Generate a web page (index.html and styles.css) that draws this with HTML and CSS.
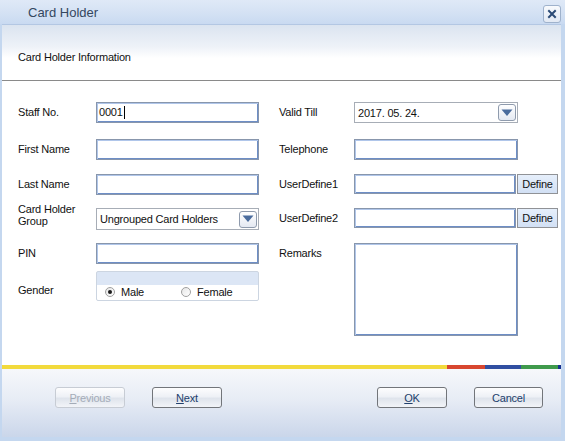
FILE: index.html
```html
<!DOCTYPE html>
<html>
<head>
<meta charset="utf-8">
<link rel="stylesheet" href="styles.css">
</head>
<body>
<div class="window">
  <div class="titlebar">
    <span class="title">Card Holder</span>
    <div class="close">
      <svg width="10" height="10" viewBox="0 0 10 10"><path d="M2 2 L8 8 M8 2 L2 8" stroke="#2c4b76" stroke-width="2" stroke-linecap="square"/></svg>
    </div>
  </div>
  <div class="body">
    <div class="header">Card Holder Information</div>
    <div class="form">
      <div class="lab c1">Staff No.</div>
      <div class="field c2">0001<span class="caret"></span></div>
      <div class="lab c4">Valid Till</div>
      <div class="combo c5">
        <span>2017. 05. 24.</span>
        <span class="arrow"><svg width="12" height="8" viewBox="0 0 12 8"><polygon points="0.5,0.5 11.5,0.5 6,7" fill="#4a6c9d"/></svg></span>
      </div>

      <div class="lab c1">First Name</div>
      <div class="field c2"></div>
      <div class="lab c4">Telephone</div>
      <div class="field c5"></div>

      <div class="lab c1">Last Name</div>
      <div class="field c2"></div>
      <div class="lab c4">UserDefine1</div>
      <div class="define-row c56">
        <div class="field narrow"></div>
        <div class="define">Define</div>
      </div>

      <div class="lab two c1">Card Holder<br>Group</div>
      <div class="combo tall c2">
        <span>Ungrouped Card Holders</span>
        <span class="arrow"><svg width="12" height="8" viewBox="0 0 12 8"><polygon points="0.5,0.5 11.5,0.5 6,7" fill="#4a6c9d"/></svg></span>
      </div>
      <div class="lab c4">UserDefine2</div>
      <div class="define-row c56">
        <div class="field narrow"></div>
        <div class="define">Define</div>
      </div>

      <div class="lab c1">PIN</div>
      <div class="field c2"></div>
      <div class="lab c4">Remarks</div>
      <div class="field remarks c5"></div>

      <div class="lab gender-lab c1">Gender</div>
      <div class="gender c2">
        <div class="radio-item male"><span class="radio checked"></span><span>Male</span></div>
        <div class="radio-item"><span class="radio"></span><span>Female</span></div>
      </div>
    </div>
    <div class="stripe"></div>
    <div class="footer">
      <div class="btn-group">
        <div class="btn disabled"><u>P</u>revious</div>
        <div class="btn"><u>N</u>ext</div>
      </div>
      <div class="btn-group">
        <div class="btn"><u>O</u>K</div>
        <div class="btn cancel">Cancel</div>
      </div>
    </div>
  </div>
</div>
</body>
</html>
```
FILE: styles.css
```css
* { box-sizing: border-box; }
body {
  margin: 0;
  font-family: "Liberation Sans", Arial, sans-serif;
  font-size: 11px;
  letter-spacing: -0.2px;
  color: #111;
}
.window {
  width: 565px;
  height: 441px;
  background: #c4d7ef;
  display: flex;
  flex-direction: column;
}
.titlebar {
  height: 24px;
  flex: none;
  display: flex;
  align-items: center;
  justify-content: space-between;
  padding: 0 4px 0 28px;
  background: linear-gradient(#dfe9f7, #d5e2f4 50%, #c9daf1);
}
.title {
  font-size: 13px;
  letter-spacing: 0;
  color: #34475f;
  margin-top: 1px;
}
.close {
  width: 18px;
  height: 18px;
  margin-top: 4px;
  border: 1px solid #9fb2cc;
  border-radius: 3px;
  background: linear-gradient(#f8fafd, #e2e9f4);
  display: flex;
  align-items: center;
  justify-content: center;
}
.body {
  flex: 1;
  margin: 0 4px 4px 2px;
  border-top: 1px solid #b3c7e3;
  display: flex;
  flex-direction: column;
  background: #fff;
}
.header {
  height: 56px;
  flex: none;
  border-bottom: 1px solid #8a8a8a;
  background: linear-gradient(#dbe4f0, #eef2f8 40%, #fff 60%);
  padding: 26px 0 0 16px;
  line-height: 12px;
}
.form {
  flex: 1;
  display: grid;
  grid-template-columns: 78px 163px 20px 75px 164px 41px;
  grid-template-rows: 37px 35px 34px 35px 28px 1fr;
  align-items: start;
  padding: 21px 0 0 16px;
}
.c1 { grid-column: 1; }
.c2 { grid-column: 2; }
.c4 { grid-column: 4; }
.c5 { grid-column: 5; }
.c56 { grid-column: 5 / span 2; }
.lab {
  height: 21px;
  line-height: 21px;
  white-space: nowrap;
}
.lab.two {
  height: auto;
  line-height: 12px;
  margin-top: -5px;
}
.lab.gender-lab {
  height: auto;
  line-height: 12px;
  margin-top: 13px;
}
.field {
  height: 21px;
  border: 1px solid #8896ac;
  box-shadow: inset 1px 1px 0 #b0c6ea, inset -1px -1px 0 #6d8ec6;
  background: #fff;
  padding: 0 2px;
  line-height: 19px;
  display: flex;
  align-items: center;
}
.caret {
  display: inline-block;
  width: 1px;
  height: 13px;
  background: #000;
  margin-left: 1px;
}
.field.remarks {
  grid-row: span 2;
  height: 93px;
}
.combo {
  height: 21px;
  border: 1px solid #a7adb6;
  background: #fff;
  display: flex;
  align-items: center;
  justify-content: space-between;
  padding: 0 1px 0 3px;
}
.combo.tall { height: 22px; }
.arrow {
  width: 18px;
  height: 17px;
  border: 1px solid #8f9bad;
  border-radius: 3px;
  background: linear-gradient(#ffffff, #e4e9f2);
  display: flex;
  align-items: center;
  justify-content: center;
}
.define-row {
  display: flex;
  gap: 1px;
}
.field.narrow { width: 162px; height: 20px; }
.define {
  width: 41px;
  height: 20px;
  border: 1px solid #909296;
  background: linear-gradient(#e6effb, #d2e0f4);
  text-align: center;
  line-height: 18px;
}
.gender {
  height: 30px;
  border: 1px solid #ccd5e1;
  border-radius: 2px;
  background: linear-gradient(#dce6f5 0, #dce6f5 13px, #fff 13px);
  display: flex;
  align-items: center;
  padding: 12px 0 0 8px;
}
.radio-item {
  display: flex;
  align-items: center;
  gap: 6px;
}
.radio-item.male { width: 76px; }
.radio {
  width: 10px;
  height: 10px;
  border: 1px solid #a0a0a0;
  border-radius: 50%;
  background: linear-gradient(135deg, #e6e6e6, #ffffff);
  display: flex;
  align-items: center;
  justify-content: center;
}
.radio.checked::after {
  content: "";
  width: 4px;
  height: 4px;
  border-radius: 50%;
  background: #1a1a1a;
}
.stripe {
  height: 4px;
  flex: none;
  background: linear-gradient(to right,
    #f2da3c 0, #f2da3c 445px,
    #d8472f 445px, #d8472f 483px,
    #304fa1 483px, #304fa1 519px,
    #3f9a4c 519px, #3f9a4c 556px,
    #15308e 556px);
}
.footer {
  height: 68px;
  flex: none;
  display: flex;
  justify-content: space-between;
  align-items: flex-start;
  padding: 18px 18px 0 53px;
  background: linear-gradient(#f6f8fb, #e7ecf5 45%, #cad6ea);
}
.btn-group {
  display: flex;
  gap: 27px;
}
.btn {
  width: 70px;
  height: 21px;
  border: 1px solid #72757a;
  border-radius: 3px;
  background: linear-gradient(#fdfdfe, #eef1f6 45%, #dfe4ec 55%, #f2f4f8);
  color: #22406c;
  text-align: center;
  line-height: 20px;
}
.btn.cancel { width: 69px; }
.btn.disabled {
  border-color: #c7ccd4;
  color: #a4acb8;
}
u { text-decoration: underline; }
```
